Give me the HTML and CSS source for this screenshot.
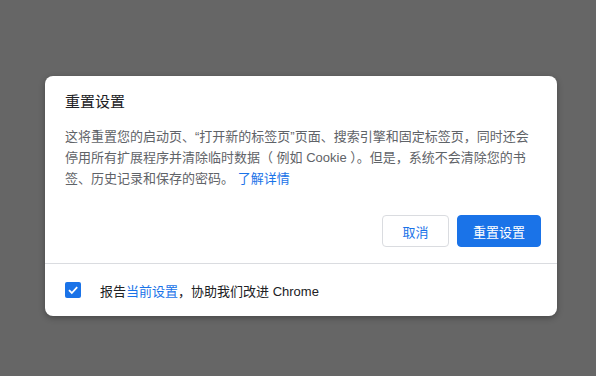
FILE: index.html
```html
<!DOCTYPE html>
<html lang="zh-CN">
<head>
    <meta charset="UTF-8">
    <title>重置设置</title>
    <link rel="stylesheet" href="styles.css">
</head>
<body>

<div class="dialog">
    <div class="dialog-main">
        <div class="title">重置设置</div>
        <div class="text">
            这将重置您的启动页、“打开新的标签页”页面、搜索引擎和固定标签页，同时还会停用所有扩展程序并清除临时数据（ 例如 Cookie ）。但是，系统不会清除您的书签、历史记录和保存的密码。 <a class="link" href="#">了解详情</a>
        </div>
        <div class="buttons">
            <button class="button cancel">取消</button>
            <button class="button action">重置设置</button>
        </div>
    </div>
    <div class="footer">
        <span class="checkbox">
            <svg width="12" height="12" viewBox="0 0 12 12"><path d="M2 6.2 L4.8 9 L10.2 3.2" fill="none" stroke="#fff" stroke-width="1.8"/></svg>
        </span>
        <span class="footer-text">报告<a class="link" href="#">当前设置</a>，协助我们改进 Chrome</span>
    </div>
</div>

</body>
</html>
```

FILE: styles.css
```css
body {
    margin: 0;
    height: 376px;
    background-color: #666666;
    font-family: "Liberation Sans", "Noto Sans CJK SC", sans-serif;
    display: flex;
    justify-content: center;
    align-items: flex-start;
}
.dialog {
    margin-top: 76px;
    margin-left: 6px;
    width: 512px;
    background-color: #fff;
    border-radius: 8px;
    box-shadow: 0 2px 6px rgba(0, 0, 0, 0.3);
    overflow: hidden;
}
.dialog-main {
    padding: 16px 16px 16px 20px;
    border-bottom: 1px solid #dadce0;
}
.title {
    font-size: 15px;
    line-height: 20px;
    color: #202124;
}
.text {
    margin-top: 14px;
    width: 472px;
    font-size: 13px;
    line-height: 21px;
    color: #5f6368;
}
.link {
    color: #1a73e8;
    text-decoration: none;
}
.buttons {
    margin-top: 26px;
    display: flex;
    justify-content: flex-end;
    gap: 8px;
}
.button {
    height: 32px;
    padding: 0 15px;
    font-family: inherit;
    font-size: 13px;
    border-radius: 4px;
    cursor: pointer;
}
.button.cancel {
    min-width: 67px;
    background-color: #fff;
    color: #1a73e8;
    border: 1px solid #dadce0;
}
.button.action {
    background-color: #1a73e8;
    color: #fff;
    border: 1px solid #1a73e8;
}
.footer {
    height: 52px;
    padding-left: 20px;
    display: flex;
    align-items: center;
    gap: 19px;
}
.checkbox {
    width: 16px;
    height: 16px;
    border-radius: 2px;
    background-color: #1a73e8;
    display: flex;
    justify-content: center;
    align-items: center;
}
.footer-text {
    font-size: 13px;
    color: #202124;
}
```
